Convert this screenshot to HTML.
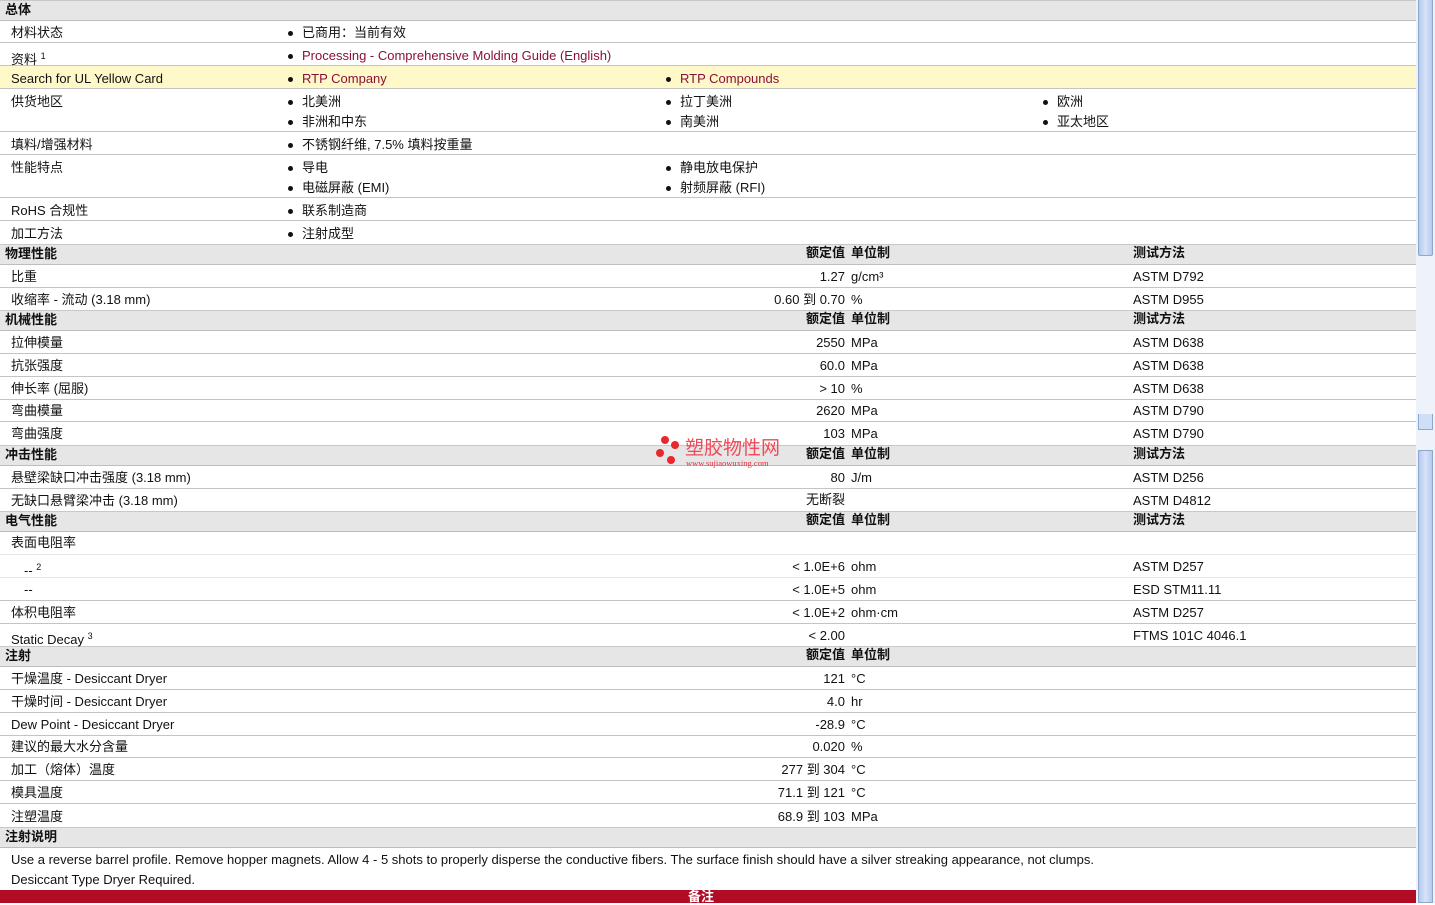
<!DOCTYPE html>
<html><head><meta charset="utf-8"><style>
*{margin:0;padding:0}
body{width:1435px;height:903px;overflow:hidden;background:#fff;position:relative;font-family:"Liberation Sans","Noto Sans CJK SC",sans-serif;font-size:13px;color:#111}
.r{position:absolute;left:0;width:1416px;border-bottom:1px solid #c4c4c4;box-sizing:border-box}
.h{background:#e6e6e6;border-top:1px solid #c8c8c8;border-bottom:1px solid #bdbdbd}
.y{background:#fff8c8}
.t{position:absolute;line-height:16px;white-space:nowrap;margin-top:1px}
.b{font-weight:bold;font-size:13px}
.v{right:590px;text-align:right}
.l{color:#8b1038}
.d{position:absolute;width:5px;height:5px;border-radius:50%;background:#111;margin-top:1px}
sup{font-size:9px;vertical-align:5px}
</style></head><body>
<div class="r h" style="top:0;height:21px"></div>
<div class="r" style="top:21px;height:22px"></div>
<div class="r" style="top:43px;height:23px"></div>
<div class="r y" style="top:66px;height:23px"></div>
<div class="r" style="top:89px;height:43px"></div>
<div class="r" style="top:132px;height:23px"></div>
<div class="r" style="top:155px;height:43px"></div>
<div class="r" style="top:198px;height:23px"></div>
<div class="r" style="top:221px;height:23px;border:0"></div>
<div class="r h" style="top:244px;height:21px"></div>
<div class="r" style="top:265px;height:23px"></div>
<div class="r" style="top:288px;height:22px;border:0"></div>
<div class="r h" style="top:310px;height:21px"></div>
<div class="r" style="top:331px;height:23px"></div>
<div class="r" style="top:354px;height:23px"></div>
<div class="r" style="top:377px;height:23px"></div>
<div class="r" style="top:400px;height:22px"></div>
<div class="r" style="top:422px;height:23px;border:0"></div>
<div class="r h" style="top:445px;height:21px"></div>
<div class="r" style="top:466px;height:23px"></div>
<div class="r" style="top:489px;height:22px;border:0"></div>
<div class="r h" style="top:511px;height:21px"></div>
<div class="r" style="top:532px;height:23px;border-color:#e6e6e6"></div>
<div class="r" style="top:555px;height:23px;border-color:#e6e6e6"></div>
<div class="r" style="top:578px;height:23px"></div>
<div class="r" style="top:601px;height:23px"></div>
<div class="r" style="top:624px;height:22px;border:0"></div>
<div class="r h" style="top:646px;height:21px"></div>
<div class="r" style="top:667px;height:23px"></div>
<div class="r" style="top:690px;height:23px"></div>
<div class="r" style="top:713px;height:23px"></div>
<div class="r" style="top:736px;height:22px"></div>
<div class="r" style="top:758px;height:23px"></div>
<div class="r" style="top:781px;height:23px"></div>
<div class="r" style="top:804px;height:23px;border:0"></div>
<div class="r h" style="top:827px;height:21px"></div>
<div style="position:absolute;left:0;top:890px;width:1416px;height:13px;background:#b00c24"></div>
<div class="t b" style="left:688px;top:888px;color:#fff">备注</div>

<div class="t b" style="left:5px;top:1px">总体</div>
<div class="t" style="left:11px;top:24px">材料状态</div><div class="d" style="left:288px;top:30px"></div><div class="t" style="left:302px;top:24px">已商用：当前有效</div>
<div class="t" style="left:11px;top:47px">资料 <sup>1</sup></div><div class="d" style="left:288px;top:53px"></div><div class="t l" style="left:302px;top:47px">Processing - Comprehensive Molding Guide (English)</div>
<div class="t" style="left:11px;top:70px">Search for UL Yellow Card</div><div class="d" style="left:288px;top:76px"></div><div class="t l" style="left:302px;top:70px">RTP Company</div><div class="d" style="left:666px;top:76px"></div><div class="t l" style="left:680px;top:70px">RTP Compounds</div>
<div class="t" style="left:11px;top:93px">供货地区</div>
<div class="d" style="left:288px;top:99px"></div><div class="t" style="left:302px;top:93px">北美洲</div>
<div class="d" style="left:666px;top:99px"></div><div class="t" style="left:680px;top:93px">拉丁美洲</div>
<div class="d" style="left:1043px;top:99px"></div><div class="t" style="left:1057px;top:93px">欧洲</div>
<div class="d" style="left:288px;top:119px"></div><div class="t" style="left:302px;top:113px">非洲和中东</div>
<div class="d" style="left:666px;top:119px"></div><div class="t" style="left:680px;top:113px">南美洲</div>
<div class="d" style="left:1043px;top:119px"></div><div class="t" style="left:1057px;top:113px">亚太地区</div>
<div class="t" style="left:11px;top:136px">填料/增强材料</div><div class="d" style="left:288px;top:142px"></div><div class="t" style="left:302px;top:136px">不锈钢纤维, 7.5% 填料按重量</div>
<div class="t" style="left:11px;top:159px">性能特点</div>
<div class="d" style="left:288px;top:165px"></div><div class="t" style="left:302px;top:159px">导电</div>
<div class="d" style="left:666px;top:165px"></div><div class="t" style="left:680px;top:159px">静电放电保护</div>
<div class="d" style="left:288px;top:185px"></div><div class="t" style="left:302px;top:179px">电磁屏蔽 (EMI)</div>
<div class="d" style="left:666px;top:185px"></div><div class="t" style="left:680px;top:179px">射频屏蔽 (RFI)</div>
<div class="t" style="left:11px;top:202px">RoHS 合规性</div><div class="d" style="left:288px;top:208px"></div><div class="t" style="left:302px;top:202px">联系制造商</div>
<div class="t" style="left:11px;top:225px">加工方法</div><div class="d" style="left:288px;top:231px"></div><div class="t" style="left:302px;top:225px">注射成型</div>

<div class="t b" style="left:5px;top:245px">物理性能</div><div class="t b v" style="top:244px">额定值</div><div class="t b" style="left:851px;top:244px">单位制</div><div class="t b" style="left:1133px;top:244px">测试方法</div>
<div class="t" style="left:11px;top:268px">比重</div><div class="t v" style="top:268px">1.27</div><div class="t" style="left:851px;top:268px">g/cm³</div><div class="t" style="left:1133px;top:268px">ASTM D792</div>
<div class="t" style="left:11px;top:291px">收缩率 - 流动 (3.18 mm)</div><div class="t v" style="top:291px">0.60 到 0.70</div><div class="t" style="left:851px;top:291px">%</div><div class="t" style="left:1133px;top:291px">ASTM D955</div>

<div class="t b" style="left:5px;top:311px">机械性能</div><div class="t b v" style="top:310px">额定值</div><div class="t b" style="left:851px;top:310px">单位制</div><div class="t b" style="left:1133px;top:310px">测试方法</div>
<div class="t" style="left:11px;top:334px">拉伸模量</div><div class="t v" style="top:334px">2550</div><div class="t" style="left:851px;top:334px">MPa</div><div class="t" style="left:1133px;top:334px">ASTM D638</div>
<div class="t" style="left:11px;top:357px">抗张强度</div><div class="t v" style="top:357px">60.0</div><div class="t" style="left:851px;top:357px">MPa</div><div class="t" style="left:1133px;top:357px">ASTM D638</div>
<div class="t" style="left:11px;top:380px">伸长率 (屈服)</div><div class="t v" style="top:380px">&gt; 10</div><div class="t" style="left:851px;top:380px">%</div><div class="t" style="left:1133px;top:380px">ASTM D638</div>
<div class="t" style="left:11px;top:402px">弯曲模量</div><div class="t v" style="top:402px">2620</div><div class="t" style="left:851px;top:402px">MPa</div><div class="t" style="left:1133px;top:402px">ASTM D790</div>
<div class="t" style="left:11px;top:425px">弯曲强度</div><div class="t v" style="top:425px">103</div><div class="t" style="left:851px;top:425px">MPa</div><div class="t" style="left:1133px;top:425px">ASTM D790</div>

<div class="t b" style="left:5px;top:446px">冲击性能</div><div class="t b v" style="top:445px">额定值</div><div class="t b" style="left:851px;top:445px">单位制</div><div class="t b" style="left:1133px;top:445px">测试方法</div>
<div class="t" style="left:11px;top:469px">悬壁梁缺口冲击强度 (3.18 mm)</div><div class="t v" style="top:469px">80</div><div class="t" style="left:851px;top:469px">J/m</div><div class="t" style="left:1133px;top:469px">ASTM D256</div>
<div class="t" style="left:11px;top:492px">无缺口悬臂梁冲击 (3.18 mm)</div><div class="t v" style="top:491px">无断裂</div><div class="t" style="left:1133px;top:492px">ASTM D4812</div>

<div class="t b" style="left:5px;top:512px">电气性能</div><div class="t b v" style="top:511px">额定值</div><div class="t b" style="left:851px;top:511px">单位制</div><div class="t b" style="left:1133px;top:511px">测试方法</div>
<div class="t" style="left:11px;top:534px">表面电阻率</div>
<div class="t" style="left:24px;top:558px">-- <sup>2</sup></div><div class="t v" style="top:558px">&lt; 1.0E+6</div><div class="t" style="left:851px;top:558px">ohm</div><div class="t" style="left:1133px;top:558px">ASTM D257</div>
<div class="t" style="left:24px;top:581px">--</div><div class="t v" style="top:581px">&lt; 1.0E+5</div><div class="t" style="left:851px;top:581px">ohm</div><div class="t" style="left:1133px;top:581px">ESD STM11.11</div>
<div class="t" style="left:11px;top:604px">体积电阻率</div><div class="t v" style="top:604px">&lt; 1.0E+2</div><div class="t" style="left:851px;top:604px">ohm·cm</div><div class="t" style="left:1133px;top:604px">ASTM D257</div>
<div class="t" style="left:11px;top:627px">Static Decay <sup>3</sup></div><div class="t v" style="top:627px">&lt; 2.00</div><div class="t" style="left:1133px;top:627px">FTMS 101C 4046.1</div>

<div class="t b" style="left:5px;top:647px">注射</div><div class="t b v" style="top:646px">额定值</div><div class="t b" style="left:851px;top:646px">单位制</div>
<div class="t" style="left:11px;top:670px">干燥温度 - Desiccant Dryer</div><div class="t v" style="top:670px">121</div><div class="t" style="left:851px;top:670px">°C</div>
<div class="t" style="left:11px;top:693px">干燥时间 - Desiccant Dryer</div><div class="t v" style="top:693px">4.0</div><div class="t" style="left:851px;top:693px">hr</div>
<div class="t" style="left:11px;top:716px">Dew Point - Desiccant Dryer</div><div class="t v" style="top:716px">-28.9</div><div class="t" style="left:851px;top:716px">°C</div>
<div class="t" style="left:11px;top:738px">建议的最大水分含量</div><div class="t v" style="top:738px">0.020</div><div class="t" style="left:851px;top:738px">%</div>
<div class="t" style="left:11px;top:761px">加工（熔体）温度</div><div class="t v" style="top:761px">277 到 304</div><div class="t" style="left:851px;top:761px">°C</div>
<div class="t" style="left:11px;top:784px">模具温度</div><div class="t v" style="top:784px">71.1 到 121</div><div class="t" style="left:851px;top:784px">°C</div>
<div class="t" style="left:11px;top:808px">注塑温度</div><div class="t v" style="top:808px">68.9 到 103</div><div class="t" style="left:851px;top:808px">MPa</div>

<div class="t b" style="left:5px;top:828px">注射说明</div>
<div class="t" style="left:11px;top:851px">Use a reverse barrel profile. Remove hopper magnets. Allow 4 - 5 shots to properly disperse the conductive fibers. The surface finish should have a silver streaking appearance, not clumps.</div>
<div class="t" style="left:11px;top:871px">Desiccant Type Dryer Required.</div>

<div style="position:absolute;left:661px;top:436px;width:8px;height:8px;border-radius:50%;background:#e8282e"></div>
<div style="position:absolute;left:671px;top:441px;width:8px;height:8px;border-radius:50%;background:#e8282e"></div>
<div style="position:absolute;left:656px;top:449px;width:8px;height:8px;border-radius:50%;background:#e8282e"></div>
<div style="position:absolute;left:667px;top:456px;width:8px;height:8px;border-radius:50%;background:#e8282e"></div>
<div class="t" style="left:685px;top:438px;font-size:19px;line-height:20px;color:#ee4a58">塑胶物性网</div>
<div class="t" style="left:686px;top:457px;font-size:8.5px;line-height:10px;color:#e03040;font-family:'Liberation Serif',serif">www.sujiaowuxing.com</div>

<div style="position:absolute;left:1416px;top:0;width:19px;height:903px;background:#eef3fb"></div>
<div style="position:absolute;left:1418px;top:0;width:15px;height:256px;background:linear-gradient(90deg,#b4cbee,#d6e4f8,#b4cbee);border:1px solid #8ea6d0;border-top:0;box-sizing:border-box;border-radius:0 0 2px 2px"></div>
<div style="position:absolute;left:1418px;top:414px;width:15px;height:16px;border:1px solid #8ea6d0;border-top:0;box-sizing:border-box;background:#cfdff6"></div>
<div style="position:absolute;left:1418px;top:450px;width:15px;height:453px;background:linear-gradient(90deg,#b4cbee,#d6e4f8,#b4cbee);border:1px solid #8ea6d0;box-sizing:border-box"></div>
</body></html>
